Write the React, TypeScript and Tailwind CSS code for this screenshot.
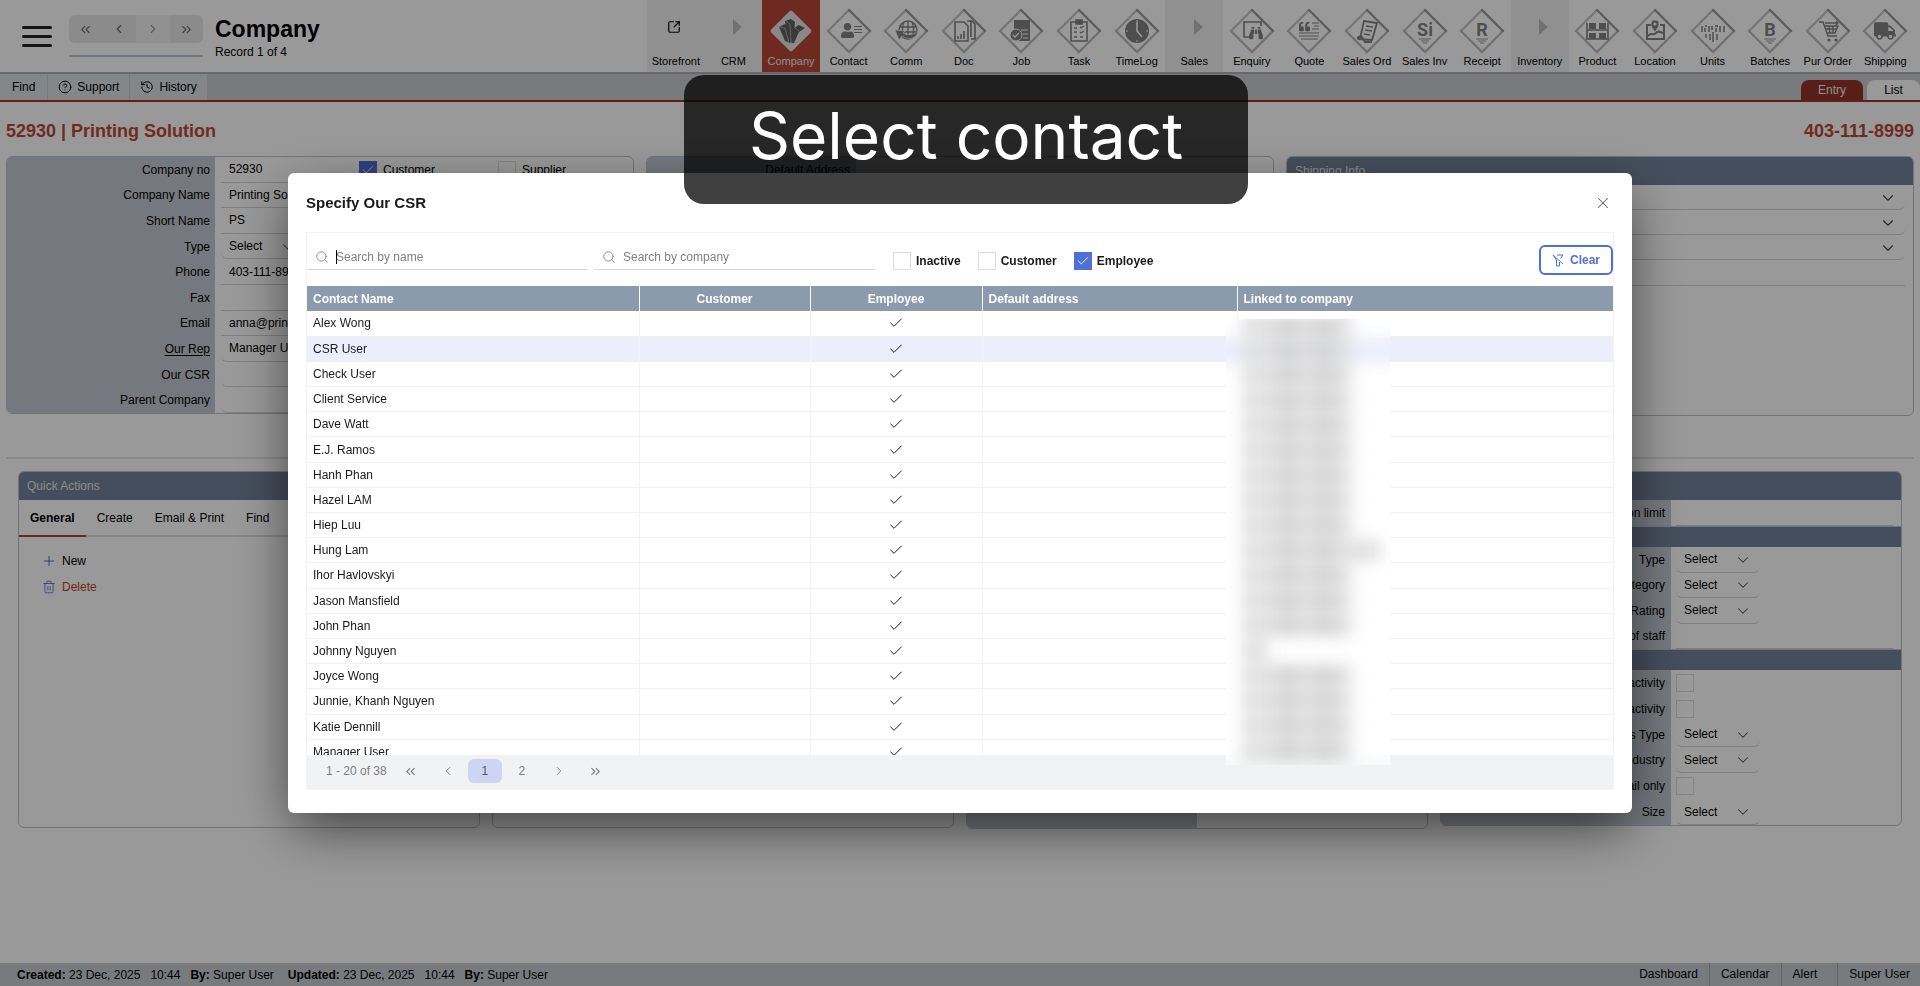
import { ReactNode, useState } from "react";
import { FaBinoculars, FaQuoteLeft, FaTruck, FaUser } from "react-icons/fa";
import {
  Check,
  ChevronDown,
  ChevronLeft,
  ChevronRight,
  ChevronsLeft,
  ChevronsRight,
  CircleHelp,
  History,
  Plus,
  Search,
  SquareArrowOutUpRight,
  Trash2,
  X,
} from "lucide-react";

type NavItem = { label: string; icon?: ReactNode; kind?: "group" | "active" };
type Field = { label: string; value?: string; type?: "text" | "select" | "lookup"; underline?: boolean };
type Row = { label: string; type: "text" | "select" | "check" };

const grey = "#828282";

// -------- Glyphs drawn inside the diamonds (46 x 46 box) --------
const glyphs = {
  company: (
    <g fill="#626262">
      <path d="M17 13l6-2 4 3-2 20-4 1z" />
      <path d="M11 19l6-3 3 3 2 16-5-2z" />
      <path d="M26 20l5-3 6 3-6 4-5 11h-3z" />
      <path d="M18 13l4 3 1 19M12 19l5 1 4 15M27 20l4 3" stroke="#d0d0d0" strokeWidth=".6" fill="none" />
    </g>
  ),
  contact: (
    <g fill={grey}>
      <FaUser x="14" y="15" size="15" color={grey} />
      <path d="M28 18h8v1h-8zM28 21h8v1h-8zM28 24h8v1h-8z" />
    </g>
  ),
  comm: (
    <g fill="none" stroke={grey} strokeWidth="1.4">
      <circle cx="25" cy="22" r="9" />
      <path d="M17 19h16M17 24h16M25 13v18M21 14c-2 4-2 10 0 16M29 14c2 4 2 10 0 16" />
      <path d="M35 23c-1 7-9 10-16 5l-3 4-4-10 10 1-2 2c5 3 11 2 15-2z" fill={grey} stroke="white" strokeWidth=".6" />
    </g>
  ),
  doc: (
    <g fill="none" stroke={grey} strokeWidth="1.6">
      <path d="M14 14h9l4 4v15H14z" />
      <path d="M26 13h5l3 3v15h-4M30 13v16" />
      <path d="M17 31v-3M20 31v-5M23 31v-8" />
    </g>
  ),
  job: (
    <g fill={grey}>
      <path d="M16 12h16v21H16z" />
      <path d="M23 22h7M25 26h5M25 30h5" stroke="white" strokeWidth="1.2" />
      <circle cx="18" cy="27" r="6" stroke="white" strokeWidth="1" />
      <path d="M15 27l2 2 4-4" stroke="white" strokeWidth="1.3" fill="none" />
    </g>
  ),
  task: (
    <g fill="none" stroke={grey} strokeWidth="1.6">
      <path d="M15 14h16v19H15z" />
      <path d="M20 12h6v4h-6z" fill={grey} />
      <path d="M18 20h3M18 24h3M18 29h3M24 19l1 1 3-2M24 24l1 1 3-2M24 29h3" strokeWidth="1.3" />
    </g>
  ),
  time: (
    <g>
      <circle cx="23" cy="23" r="12" fill={grey} />
      <path d="M23 14v9l5 6" stroke="white" strokeWidth="1.6" fill="none" />
      <path d="M23 12v2M23 32v2M12 23h2M32 23h2" stroke="white" />
    </g>
  ),
  enquiry: (
    <g fill={grey}>
      <path d="M20 29h-5V14h17v4" fill="none" stroke={grey} strokeWidth="1.6" />
      <FaBinoculars x="20" y="18" size="14" color={grey} />
    </g>
  ),
  quote: (
    <g fill={grey}>
      <FaQuoteLeft x="13" y="13" size="11" color={grey} />
      <path d="M26 15h7M28 18h5M26 21h7M13 25h20M13 28h20M15 31h17" stroke={grey} strokeWidth="1.2" />
    </g>
  ),
  order: (
    <g fill="none" stroke={grey} strokeWidth="1.8">
      <path d="M20 13l13 2-5 17-14-1c3 0 3-3 3-5z" />
      <path d="M14 31c-1-2 2-4 4-2l3 5h7" fill={grey} />
      <path d="M22 18l7 1M21 22l7 1M20 26l6 1" strokeWidth="1.3" />
    </g>
  ),
  product: (
    <g fill={grey}>
      <path d="M13 15v17M34 15v17M13 22h21M13 31h21" stroke={grey} strokeWidth="1.6" />
      <path d="M15 15h7v6h-7zM25 15h7v6h-7zM15 25h7v6h-7zM25 25h7v6h-7z" />
    </g>
  ),
  location: (
    <g fill="none" stroke={grey} strokeWidth="2">
      <path d="M19 17h-4v14h17V17h-4M16 28c3-4 6 0 8-3s4-1 7 0" />
      <path d="M23 24c-2-4-4-5-4-8a4 4 0 018 0c0 3-2 4-4 8z" fill={grey} stroke="white" strokeWidth=".5" />
      <circle cx="23" cy="16" r="1.6" fill="white" stroke="none" />
    </g>
  ),
  units: (
    <path
      d="M12 18v6M15 18h2M15 20v4M19 18v6M22 18v4M25 18h3M26 20v4M30 18v6M34 18v6M16 26v4M20 26v6M23 24v10M27 26v6"
      stroke={grey}
      strokeWidth="1.5"
      fill="none"
    />
  ),
  cart: (
    <g fill="none" stroke={grey} strokeWidth="1.4">
      <path d="M14 14h4l5 14h9M19 18h14l-3 7h-8M20 21h11M24 18l1 7M28 18v7" />
      <path d="M20 15h13M31 13l2 2-2 2" />
      <circle cx="24" cy="32" r="1.6" fill={grey} stroke="none" />
      <circle cx="31" cy="32" r="1.6" fill={grey} stroke="none" />
    </g>
  ),
  truck: <FaTruck x="12" y="12" size="22" color={grey} />,
};

const letter = (text: string) => (
  <g fill={grey}>
    <text x="23" y="28" textAnchor="middle" fontSize="18" fontWeight="700" fontFamily="Roboto, sans-serif">
      {text}
    </text>
    <path d="M17 31h12M19 33h8M21 35h4" stroke="#bbbbbb" strokeWidth="1.3" />
  </g>
);

const navItems: NavItem[] = [
  { label: "Storefront", kind: "group", icon: <SquareArrowOutUpRight size={14} strokeWidth={2} className="mb-2 -ml-1" /> },
  { label: "CRM", kind: "group" },
  { label: "Company", kind: "active", icon: glyphs.company },
  { label: "Contact", icon: glyphs.contact },
  { label: "Comm", icon: glyphs.comm },
  { label: "Doc", icon: glyphs.doc },
  { label: "Job", icon: glyphs.job },
  { label: "Task", icon: glyphs.task },
  { label: "TimeLog", icon: glyphs.time },
  { label: "Sales", kind: "group" },
  { label: "Enquiry", icon: glyphs.enquiry },
  { label: "Quote", icon: glyphs.quote },
  { label: "Sales Ord", icon: glyphs.order },
  { label: "Sales Inv", icon: letter("Si") },
  { label: "Receipt", icon: letter("R") },
  { label: "Inventory", kind: "group" },
  { label: "Product", icon: glyphs.product },
  { label: "Location", icon: glyphs.location },
  { label: "Units", icon: glyphs.units },
  { label: "Batches", icon: letter("B") },
  { label: "Pur Order", icon: glyphs.cart },
  { label: "Shipping", icon: glyphs.truck },
];

const companyFields: Field[] = [
  { label: "Company Name", value: "Printing Solution" },
  { label: "Short Name", value: "PS" },
  { label: "Type", type: "select" },
  { label: "Phone", value: "403-111-8999" },
  { label: "Fax", value: "" },
  { label: "Email", value: "anna@printingsolution.com" },
  { label: "Our Rep", value: "Manager User", type: "lookup", underline: true },
  { label: "Our CSR", value: "", type: "lookup" },
  { label: "Parent Company", value: "", type: "lookup" },
];

const typeRows: Row[] = [
  { label: "Type", type: "select" },
  { label: "Category", type: "select" },
  { label: "Rating", type: "select" },
  { label: "No of staff", type: "text" },
];

const activityRows: Row[] = [
  { label: "Last activity", type: "check" },
  { label: "Next activity", type: "check" },
  { label: "Business Type", type: "select" },
  { label: "Industry", type: "select" },
  { label: "Email only", type: "check" },
  { label: "Size", type: "select" },
];

const contacts: string[] = [
  "Alex Wong",
  "CSR User",
  "Check User",
  "Client Service",
  "Dave Watt",
  "E.J. Ramos",
  "Hanh Phan",
  "Hazel LAM",
  "Hiep Luu",
  "Hung Lam",
  "Ihor Havlovskyi",
  "Jason Mansfield",
  "John Phan",
  "Johnny Nguyen",
  "Joyce Wong",
  "Junnie, Khanh Nguyen",
  "Katie Dennill",
  "Manager User",
];

const toId = (label: string) => label.toLowerCase().replace(/\W+/g, "-");

// -------- Shared controls --------
const CheckBox = ({ id, checked = false }: { id: string; checked?: boolean }) => {
  const [on, setOn] = useState<boolean>(checked);
  return (
    <span className="grid size-[18px] shrink-0 place-items-center">
      <input
        type="checkbox"
        id={id}
        checked={on}
        onChange={() => setOn(!on)}
        className="col-start-1 row-start-1 size-[18px] appearance-none border border-[#dcdcdc] bg-white checked:border-[#4f6fd9] checked:bg-[#4f6fd9]"
      />
      {on && <Check size={14} strokeWidth={1.5} className="pointer-events-none col-start-1 row-start-1 text-white" />}
    </span>
  );
};

const SmallSelect = ({ id }: { id: string }) => (
  <span className="grid h-full w-[84px] items-center">
    <select id={id} className="col-start-1 row-start-1 h-full w-full appearance-none rounded-b-md border-b border-[#d4d4d4] pl-2">
      <option>Select</option>
    </select>
    <ChevronDown size={18} strokeWidth={1.4} className="pointer-events-none col-start-1 row-start-1 mr-2 justify-self-end text-[#555]" />
  </span>
);

const Diamond = ({ children, active }: { children: ReactNode; active: boolean }) => (
  <svg width="46" height="46" viewBox="0 0 46 46" aria-hidden="true">
    <rect x="8" y="8" width="30" height="30" rx="2" transform="rotate(45 23 23)" fill={active ? "#e4e4e4" : "#fff"} />
    {!active && (
      <g fill="none" strokeWidth="2.4" strokeLinecap="round">
        <path d="M23 2L2 23" stroke="#c6c6c6" />
        <path d="M2 23l21 21 21-21" stroke="#bdbdbd" />
        <path d="M23 2l21 21" stroke="#9b9b9b" />
      </g>
    )}
    {children}
  </svg>
);

const PanelTitle = ({ children }: { children?: ReactNode }) => (
  <h2 className="flex h-7 items-center bg-[#738299] px-2 text-xs text-[#e8e8e8]">{children}</h2>
);

const FieldRows = ({ rows }: { rows: Row[] }) => (
  <>
    {rows.map((row) => (
      <div key={row.label} className="flex flex-1">
        <label htmlFor={toId("f " + row.label)} className="flex w-1/2 items-center justify-end bg-[#c4c9d2] pr-[6px]">
          {row.label}
        </label>
        <div className="flex w-1/2 items-center pr-2 pl-[5px]">
          {row.type === "select" && <SmallSelect id={toId("f " + row.label)} />}
          {row.type === "check" && <CheckBox id={toId("f " + row.label)} />}
          {row.type === "text" && (
            <input type="text" id={toId("f " + row.label)} className="h-full w-full border-b border-[#d4d4d4] px-2" />
          )}
        </div>
      </div>
    ))}
  </>
);

// -------- Page header --------
const Header = () => (
  <header className="flex h-[74px] border-b-2 border-[#b0b0b0]">
    <div className="flex flex-1 items-start">
      <button aria-label="Menu" className="mt-[26px] ml-[22px] flex w-[30px] flex-col gap-[6px]">
        <span className="h-[3px] w-full rounded bg-[#222]" />
        <span className="h-[3px] w-full rounded bg-[#222]" />
        <span className="h-[3px] w-full rounded bg-[#222]" />
      </button>
      <div className="mt-[15px] ml-[17px] w-[134px]">
        <div className="flex h-7 overflow-hidden rounded-md bg-[#e8e8e8] text-[#666]">
          <button aria-label="First record" className="flex flex-1 items-center justify-center"><ChevronsLeft size={15} strokeWidth={1.7} /></button>
          <button aria-label="Previous record" className="flex flex-1 items-center justify-center"><ChevronLeft size={14} /></button>
          <button aria-label="Next record" className="flex flex-1 items-center justify-center bg-[#f2f2f2] text-[#999]"><ChevronRight size={14} /></button>
          <button aria-label="Last record" className="flex flex-1 items-center justify-center"><ChevronsRight size={15} strokeWidth={1.7} /></button>
        </div>
        <div className="mt-3 h-[2px] bg-[#bfc6d0]" />
      </div>
      <div className="mt-[14px] ml-3">
        <h1 className="text-[23px] leading-[30px] font-bold">Company</h1>
        <p className="leading-4">Record 1 of 4</p>
      </div>
    </div>
    <nav className="flex w-[66.3%] pr-[6px]">
      {navItems.map((item) => (
        <a
          key={item.label}
          href="#"
          className={
            item.kind === "active"
              ? "flex min-w-0 flex-1 flex-col items-center bg-[#b74635] pt-2 text-[11px] text-[#eee]"
              : item.kind === "group"
                ? "flex min-w-0 flex-1 flex-col items-center bg-[#f1f1f1] pt-2 text-[11px]"
                : "flex min-w-0 flex-1 flex-col items-center pt-2 text-[11px]"
          }
        >
          <span className="flex h-[46px] items-center justify-center">
            {item.kind !== "group" ? (
              <Diamond active={item.kind === "active"}>{item.icon}</Diamond>
            ) : (
              item.icon || (
                <svg width="9" height="16" viewBox="0 0 9 16" aria-hidden="true" className="mb-2 ml-2">
                  <path d="M0 0l9 8-9 8z" fill="#bdbdbd" />
                </svg>
              )
            )}
          </span>
          <span className="leading-[14px] whitespace-nowrap">{item.label}</span>
        </a>
      ))}
    </nav>
  </header>
);

const Toolbar = () => (
  <div className="flex h-[28px] justify-between border-b-2 border-[#9c3528] bg-[#c8ccd3] text-xs">
    <div className="flex gap-px">
      <button className="bg-[#dce2e6] px-3">Find</button>
      <button className="flex items-center gap-[5px] bg-[#dce2e6] px-[10px]"><CircleHelp size={14} strokeWidth={1.7} />Support</button>
      <button className="flex items-center gap-[5px] bg-[#dce2e6] px-[10px]"><History size={14} strokeWidth={1.7} />History</button>
    </div>
    <div className="flex items-end gap-1">
      <button className="h-5 w-[62px] rounded-t-lg bg-[#933228] text-[#eee]">Entry</button>
      <button className="h-5 w-[53px] rounded-t-lg bg-white">List</button>
    </div>
  </div>
);

// -------- Top row of panels --------
const CompanyPanel = () => (
  <section className="flex h-[258px] flex-col overflow-hidden rounded-md border border-[#bcc3ce]">
    <div className="flex flex-1">
      <label htmlFor="company-no" className="flex w-[208px] items-center justify-end bg-[#c4c9d2] pr-[5px]">Company no</label>
      <div className="flex flex-1 items-center pl-[6px]">
        <input type="text" id="company-no" defaultValue="52930" className="h-full w-[126px] border-b border-[#d4d4d4] px-2" />
        <span className="ml-[12px] flex w-[139px] items-center gap-[6px]">
          <CheckBox id="is-customer" checked />
          <label htmlFor="is-customer">Customer</label>
        </span>
        <span className="flex items-center gap-[6px]">
          <CheckBox id="is-supplier" />
          <label htmlFor="is-supplier">Supplier</label>
        </span>
      </div>
    </div>
    {companyFields.map((field) => (
      <div key={field.label} className="flex flex-1">
        <label htmlFor={toId(field.label)} className="flex w-[208px] items-center justify-end bg-[#c4c9d2] pr-[5px]">
          {field.underline ? <span className="underline underline-offset-2">{field.label}</span> : field.label}
        </label>
        <div className="flex flex-1 pr-2 pl-[6px]">
          {field.type === "select" ? (
            <SmallSelect id={toId(field.label)} />
          ) : (
            <input
              type="text"
              id={toId(field.label)}
              defaultValue={field.value}
              className={field.type === "lookup" ? "w-full rounded-b-md border-b border-[#d4d4d4] px-2" : "w-full border-b border-[#d4d4d4] px-2"}
            />
          )}
        </div>
      </div>
    ))}
  </section>
);

const AddressPanel = () => (
  <section className="flex h-[258px] overflow-hidden rounded-md border border-[#bcc3ce]">
    <div className="w-[209px] bg-[#c4c9d2] pt-1 pr-[6px] text-right leading-[18px]">Default Address</div>
  </section>
);

const ShippingPanel = () => (
  <section className="h-[260px] overflow-hidden rounded-md border border-[#bcc3ce]">
    <PanelTitle>Shipping Info</PanelTitle>
    <div className="flex flex-col pr-2 pl-[217px]">
      {["Shipping address", "Ship via", "Ship terms"].map((name) => (
        <span key={name} className="grid h-[25px] items-center">
          <select aria-label={name} className="col-start-1 row-start-1 h-full w-full appearance-none rounded-b-md border-b border-[#d4d4d4]" />
          <ChevronDown size={18} strokeWidth={1.5} className="pointer-events-none col-start-1 row-start-1 mr-2 justify-self-end text-[#444]" />
        </span>
      ))}
      <input type="text" aria-label="Account" className="h-[26px] border-b border-[#d4d4d4]" />
    </div>
  </section>
);

// -------- Bottom row of panels --------
const QuickActions = () => (
  <section className="h-[357px] overflow-hidden rounded-md border border-[#bcc3ce]">
    <PanelTitle>Quick Actions</PanelTitle>
    <div className="flex h-[37px] border-b-2 border-[#dedede]">
      <button className="h-[37px] border-b-2 border-[#b74635] px-[11px] font-bold">General</button>
      <button className="px-[11px]">Create</button>
      <button className="px-[11px]">Email &amp; Print</button>
      <button className="px-[11px]">Find</button>
    </div>
    <div className="flex flex-col items-start gap-2 px-[22px] pt-[15px]">
      <button className="flex items-center gap-[5px] leading-[18px]"><Plus size={16} strokeWidth={1.5} className="text-[#4f6fd9]" />New</button>
      <button className="flex items-center gap-[5px] leading-[18px] text-[#c23f2c]"><Trash2 size={14} strokeWidth={1.5} className="mx-px text-[#4f6fd9]" />Delete</button>
    </div>
  </section>
);

const DetailsPanel = () => (
  <section className="flex h-[355px] flex-col overflow-hidden rounded-md border border-[#bcc3ce]">
    <PanelTitle />
    <div className="flex h-[27px] border-b border-[#bcc3ce]">
      <FieldRows rows={[{ label: "Transaction limit", type: "text" }]} />
    </div>
    <div className="h-[20px] bg-[#738299]" />
    <div className="flex h-[103px] flex-col border-b border-[#bcc3ce]">
      <FieldRows rows={typeRows} />
    </div>
    <div className="h-[20px] bg-[#738299]" />
    <div className="flex flex-1 flex-col">
      <FieldRows rows={activityRows} />
    </div>
  </section>
);

const Footer = () => (
  <footer className="mt-auto flex h-[23px] items-center justify-between bg-[#c8ccd3] pr-[10px] pl-[17px]">
    <div className="flex gap-[10px]">
      <span><b>Created:</b> 23 Dec, 2025</span>
      <span>10:44</span>
      <span><b>By:</b> Super User</span>
      <span className="ml-1"><b>Updated:</b> 23 Dec, 2025</span>
      <span>10:44</span>
      <span><b>By:</b> Super User</span>
    </div>
    <nav className="flex divide-x divide-[#a2a6ad] leading-[23px]">
      <a href="#" className="px-[11px]">Dashboard</a>
      <a href="#" className="px-[11px]">Calendar</a>
      <a href="#" className="pr-5 pl-[11px]">Alert</a>
      <a href="#" className="pl-[11px]">Super User</a>
    </nav>
  </footer>
);

// -------- Contact picker --------
const SearchField = ({ placeholder, focused }: { placeholder: string; focused?: boolean }) => (
  <div className="flex h-[25px] w-[281px] items-center border-b border-[#d9d9d9] pl-2">
    <Search size={14} strokeWidth={1.4} className="mr-[7px] text-[#777]" />
    {focused && <span className="-mr-px h-[14px] w-px bg-black" />}
    <input type="text" aria-label={placeholder} placeholder={placeholder} className="min-w-0 flex-1 outline-none placeholder:text-[#808080]" />
  </div>
);

const FilterCheck = ({ label, checked }: { label: string; checked?: boolean }) => (
  <span className="flex h-[25px] items-end gap-[5px]">
    <CheckBox id={toId("filter " + label)} checked={checked} />
    <label htmlFor={toId("filter " + label)} className="leading-[18px] font-bold">{label}</label>
  </span>
);

const RedactedColumn = () => (
  <div className="absolute top-[86px] left-[919px] h-[446px] w-[164px] overflow-hidden bg-white">
    <div className="-mx-8 -mt-[6px] flex flex-col blur-[8px]">
      {contacts.map((name) => (
        <div
          key={name}
          className={name === "CSR User" ? "flex h-[25px] items-center bg-[#e9edfb] pl-[48px]" : "flex h-[25px] items-center pl-[48px]"}
        >
          <div
            className={
              name === "Hung Lam"
                ? "flex h-[21px] w-[138px] bg-[#dfdfdf]"
                : name === "Johnny Nguyen"
                  ? "h-[21px] w-[26px] bg-[#dfdfdf]"
                  : "flex h-[21px] w-[110px] bg-[#dfdfdf]"
            }
          >
            {name !== "Johnny Nguyen" && <span className="ml-[34px] h-full w-6 bg-[#d2d2d2]" />}
            {name !== "Johnny Nguyen" && <span className="ml-3 h-full w-6 bg-[#d2d2d2]" />}
          </div>
        </div>
      ))}
      <div className="h-10 bg-[#f2f3f5]" />
    </div>
  </div>
);

const ContactTable = () => (
  <div className="flex-1 overflow-hidden">
    <table className="h-[479px] w-full table-fixed border-collapse">
      <colgroup>
        <col className="w-[332px]" />
        <col className="w-[171px]" />
        <col className="w-[172px]" />
        <col className="w-[255px]" />
        <col />
      </colgroup>
      <thead>
        <tr className="h-[25px] bg-[#8c9aae] text-white">
          <th className="border-r border-white px-[6px] text-left">Contact Name</th>
          <th className="border-r border-white">Customer</th>
          <th className="border-r border-white">Employee</th>
          <th className="border-r border-white px-[6px] text-left">Default address</th>
          <th className="px-[6px] text-left">Linked to company</th>
        </tr>
      </thead>
      <tbody>
        {contacts.map((name) => (
          <tr key={name} className={name === "CSR User" ? "h-[25px] border-b border-[#f0f0f0] bg-[#eceffb]" : "h-[25px] border-b border-[#f0f0f0]"}>
            <td className="border-r border-[#f3f3f3] px-[6px]">{name}</td>
            <td className="border-r border-[#f3f3f3]" />
            <td className="border-r border-[#f3f3f3]"><Check size={16} strokeWidth={1.5} className="mx-auto" /></td>
            <td className="border-r border-[#f3f3f3]" />
            <td />
          </tr>
        ))}
      </tbody>
    </table>
  </div>
);

const Pager = () => (
  <div className="flex h-[34px] items-start gap-[3px] bg-[#f1f2f4] pt-1 pl-[19px] text-[#7d7d7d]">
    <span className="mr-1 leading-6">1 - 20 of 38</span>
    <button aria-label="First page" className="flex h-6 w-[34px] items-center justify-center"><ChevronsLeft size={15} strokeWidth={1.7} /></button>
    <button aria-label="Previous page" className="flex h-6 w-[34px] items-center justify-center"><ChevronLeft size={14} strokeWidth={1.7} /></button>
    <button className="h-6 w-[34px] rounded-md bg-[#cdd5f2] text-[#555]">1</button>
    <button className="h-6 w-[34px] rounded-md">2</button>
    <button aria-label="Next page" className="flex h-6 w-[34px] items-center justify-center"><ChevronRight size={14} strokeWidth={1.7} /></button>
    <button aria-label="Last page" className="flex h-6 w-[34px] items-center justify-center"><ChevronsRight size={15} strokeWidth={1.7} /></button>
  </div>
);

const ContactDialog = () => (
  <div className="fixed inset-0 flex items-center justify-center bg-black/40">
    <div
      role="dialog"
      aria-labelledby="dialog-title"
      className="flex h-[640px] w-[70%] flex-col rounded-md bg-white px-[18px] pb-[23px] text-[#1a1a1a] shadow-[0_18px_54px_-4px_rgba(0,0,0,0.6)]"
    >
      <div className="flex h-[59px] items-center justify-between pr-[2px]">
        <h2 id="dialog-title" className="text-[15px] font-bold">Specify Our CSR</h2>
        <button aria-label="Close" className="text-[#666]"><X size={18} strokeWidth={1.4} /></button>
      </div>
      <div className="relative flex flex-1 flex-col overflow-hidden border border-[#f3f3f3]">
        <div className="flex h-[53px] items-start pt-3">
          <SearchField placeholder="Search by name" focused />
          <span className="w-[6px]" />
          <SearchField placeholder="Search by company" />
          <div className="ml-[18px] flex gap-[17px]">
            <FilterCheck label="Inactive" />
            <FilterCheck label="Customer" />
            <FilterCheck label="Employee" checked />
          </div>
          <button className="ml-auto flex h-[30px] w-[74px] items-center justify-center gap-[6px] rounded-md border-2 border-[#4f6fd9] font-bold text-[#4f6fd9]">
            <svg width="12" height="13" viewBox="0 0 12 13" fill="none" stroke="currentColor" aria-hidden="true">
              <path d="M1 1l10 9M5 1h6L8.500 4.500M1 1l3.500 5v6h3V8" />
            </svg>
            Clear
          </button>
        </div>
        <ContactTable />
        <Pager />
        <RedactedColumn />
      </div>
    </div>
  </div>
);

const App = () => {
  return (
    <div className="flex min-h-screen flex-col bg-white font-['Liberation_Sans',Arial,sans-serif] text-xs text-black">
      <Header />
      <Toolbar />
      <div className="flex h-[54px] items-center justify-between px-[6px] pt-[3px] text-[18px] font-bold text-[#bc4735]">
        <span>52930 | Printing Solution</span>
        <span>403-111-8999</span>
      </div>
      <main>
        <div className="grid grid-cols-3 items-start gap-3 px-[6px]">
          <CompanyPanel />
          <AddressPanel />
          <ShippingPanel />
        </div>
        <hr className="mx-[6px] mt-[41px] border-t-2 border-[#e4e4e4]" />
        <div className="mt-3 grid grid-cols-4 items-start gap-3 px-[18px]">
          <QuickActions />
          <section className="h-[357px] rounded-md border border-[#bcc3ce]" />
          <section className="flex h-[358px] overflow-hidden rounded-md border border-[#bcc3ce]">
            <div className="w-1/2 bg-[#c4c9d2]" />
          </section>
          <DetailsPanel />
        </div>
      </main>
      <Footer />
      <ContactDialog />
      {/* -------- Step caption -------- */}
      <div className="pointer-events-none fixed inset-x-0 top-[75px] flex justify-center pl-3">
        <div className="flex h-[129px] w-[564px] items-center justify-center rounded-[20px] bg-black/75 pb-2 font-['Inter',sans-serif] text-[64px] text-white">
          Select contact
        </div>
      </div>
    </div>
  );
};

export default App;
